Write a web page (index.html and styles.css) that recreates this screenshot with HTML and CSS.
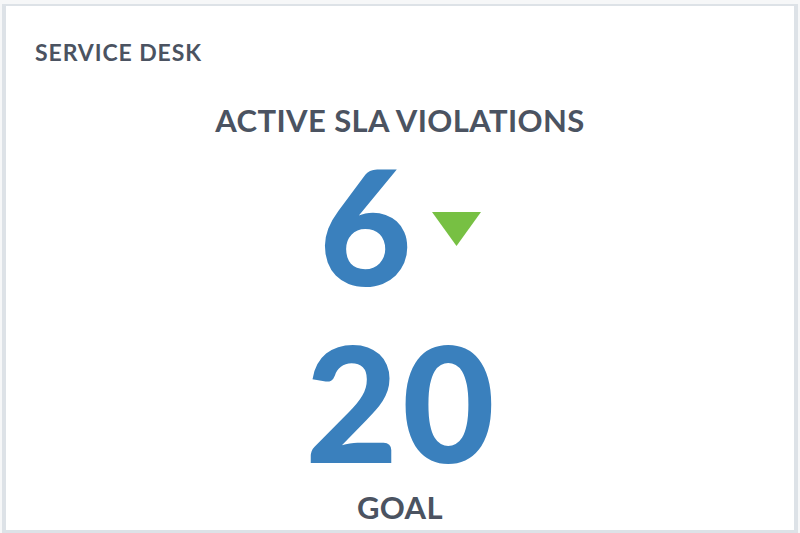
FILE: index.html
```html
<!DOCTYPE html>
<html lang="en">
<head>
  <meta charset="UTF-8">
  <meta name="viewport" content="width=device-width, initial-scale=1.0">
  <title>Service Desk</title>
  <link rel="stylesheet" href="styles.css">
</head>
<body>

<div class="widget">
  <div class="widget-title">SERVICE DESK</div>

  <div class="metric">
    <div class="metric-label">ACTIVE SLA VIOLATIONS</div>
    <div class="metric-row">
      <div class="metric-value">6</div>
      <svg class="trend" width="49" height="34" viewBox="0 0 49 34">
        <polygon points="0,0 49,0 24.5,34" fill="#77c043"/>
      </svg>
    </div>
    <div class="metric-value goal-value">20</div>
    <div class="metric-label goal-label">GOAL</div>
  </div>
</div>

</body>
</html>
```

FILE: styles.css
```css
body {
  margin: 0;
  height: 533px;
  overflow: hidden;
  background-color: #f6f7f8;
  font-family: 'Lato', 'Open Sans', sans-serif;
}

.widget {
  box-sizing: border-box;
  height: 529px;
  margin: 4px 2px 0 2px;
  background-color: #fff;
  border-style: solid;
  border-color: #dde2e7;
  border-width: 2px 4px 3px 4px;
}

.widget-title {
  padding: 35px 0 0 29px;
  font-size: 23px;
  line-height: 23px;
  font-weight: 700;
  letter-spacing: 0.9px;
  color: #4b5361;
}

.metric {
  display: flex;
  flex-direction: column;
  align-items: center;
}

.metric-label {
  margin-top: 41px;
  font-size: 31px;
  line-height: 30px;
  font-weight: 700;
  letter-spacing: 0.4px;
  color: #4b5361;
}

.metric-row {
  display: flex;
  align-items: center;
  gap: 20px;
  margin-top: 29px;
}

.metric-value {
  font-size: 160px;
  line-height: 120px;
  font-weight: 900;
  color: #3a80bd;
}

.trend {
  display: block;
  margin-top: 10px;
}

.goal-value {
  margin-top: 57px;
  padding-left: 4px;
  letter-spacing: 4px;
}

.goal-label {
  margin-top: 31px;
}
```
